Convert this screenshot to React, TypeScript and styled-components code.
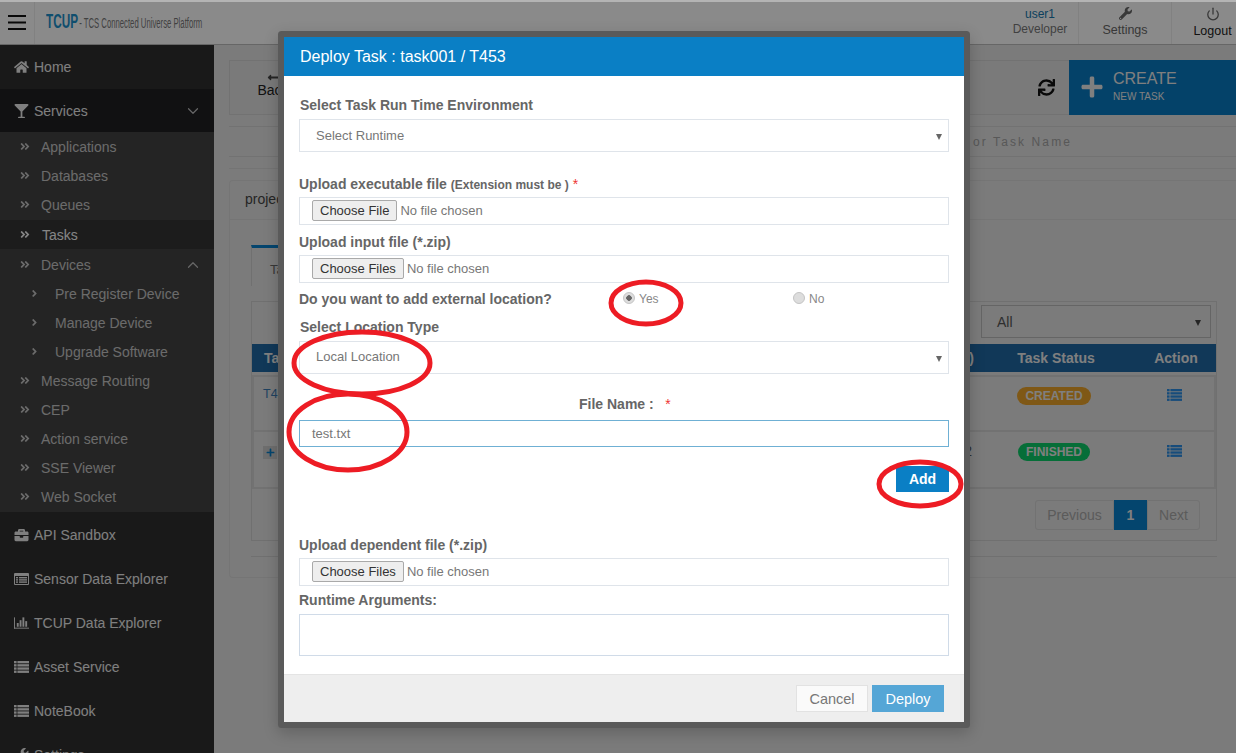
import React from "react";
import styled, { createGlobalStyle } from "styled-components";
import {
  FaHome,
  FaGlassMartini,
  FaAngleDoubleRight,
  FaAngleRight,
  FaBriefcase,
  FaWrench,
  FaSync,
  FaPlus,
  FaLongArrowAltLeft,
} from "react-icons/fa";
import { ChevronDown, ChevronUp, Power } from "lucide-react";

const GlobalStyle = createGlobalStyle`
  html, body {
    margin: 0;
    padding: 0;
    background: #e0e0e0;
    font-family: "Liberation Sans", Arial, sans-serif;
    overflow: hidden;
  }
  * { box-sizing: border-box; }
`;

const Page = styled.div`
  position: relative;
  width: 1236px;
  height: 753px;
  overflow: hidden;
  background: #e0e0e0;
`;

const TopStrip = styled.div`
  height: 2px;
  background: #b4b4b4;
`;

const Header = styled.header`
  display: flex;
  align-items: stretch;
  height: 43px;
  background: #fcfcfc;
  border-bottom: 1px solid #bbb;
`;

const MenuToggle = styled.div`
  width: 35px;
  display: flex;
  align-items: center;
  justify-content: center;
  color: #111;
  border-right: 1px solid #ececec;
  padding-bottom: 1px;
`;

const Logo = styled.div`
  display: flex;
  align-items: baseline;
  margin-left: 11px;
  padding-top: 7px;
  white-space: nowrap;
  transform: scaleX(0.56);
  transform-origin: left center;
`;

const LogoMark = styled.span`
  font-size: 21px;
  font-weight: 700;
  color: #1c8fc8;
`;

const LogoText = styled.span`
  font-size: 13.8px;
  color: #777;
  margin-left: 2px;
`;

const HeaderRight = styled.div`
  margin-left: auto;
  display: flex;
`;

const UserBlock = styled.div`
  width: 89px;
  padding: 5px 0 0 13px;
  text-align: center;
  font-size: 12px;
  line-height: 15px;
  color: #777;
  span { display: block; color: #1676ab; }
`;

const HeaderAction = styled.div<{ $w: number; $dark?: boolean; $shift?: number }>`
  width: ${(p) => p.$w}px;
  padding: 5px 0 0 ${(p) => p.$shift ?? 0}px;
  border-left: 1px solid #ececec;
  text-align: center;
  font-size: 12.5px;
  color: ${(p) => (p.$dark ? "#222" : "#666")};
  svg { display: block; margin: 0 auto 3px; color: #666; }
`;

const Main = styled.div`
  display: flex;
  height: 708px;
`;

const Sidebar = styled.nav`
  width: 214px;
  flex: none;
  background: #2f2f2f;
  color: #e8e8e8;
  font-size: 14px;
  overflow: hidden;
`;

const NavItem = styled.div<{ $active?: boolean }>`
  display: flex;
  align-items: center;
  height: 44px;
  padding: 0 14px;
  background: ${(p) => (p.$active ? "#1f1f22" : "transparent")};
  > svg:first-child { width: 15px; font-size: 14px; margin-right: 5px; flex: none; }
`;

const Caret = styled.span`
  margin-left: auto;
  margin-right: -2px;
  display: flex;
  color: #bbb;
`;

const SubMenu = styled.div`
  background: #434343;
  padding-bottom: 1px;
  margin-bottom: 1px;
  > :first-child { margin-top: -1px; }
`;

const SubItem = styled.div<{ $active?: boolean; $deep?: boolean }>`
  display: flex;
  align-items: center;
  height: 29px;
  margin: ${(p) => (p.$active ? "1px 0" : "0")};
  padding: 0 14px 0 ${(p) => (p.$deep ? "30px" : "20px")};
  color: ${(p) => (p.$active ? "#f2f2f2" : "#c4c4c4")};
  background: ${(p) => (p.$active ? "#333" : "transparent")};
  > svg:first-child {
    font-size: 11px;
    width: ${(p) => (p.$deep ? "9px" : "10px")};
    margin-right: ${(p) => (p.$deep ? "16px" : p.$active ? "12px" : "11px")};
    flex: none;
  }
`;

const Content = styled.main`
  flex: 1;
  padding: 15px 0 0 15px;
  min-width: 0;
`;

const Toolbar = styled.div`
  display: flex;
  align-items: center;
  height: 55px;
  background: #dfdfdf;
  border: 1px solid #cfcfcf;
  border-right: none;
`;

const BackButton = styled.div`
  width: 86px;
  padding-bottom: 6px;
  text-align: center;
  font-size: 14px;
  color: #222;
  svg { display: block; margin: 0 auto -2px; font-size: 13px; color: #444; }
`;

const RefreshIcon = styled.div`
  margin-left: auto;
  margin-right: 14px;
  display: flex;
  font-size: 17px;
  color: #111;
`;

const CreateButton = styled.div`
  width: 167px;
  height: 55px;
  margin: -1px 0;
  display: flex;
  align-items: center;
  padding: 0 0 1px 11px;
  background: #0878bf;
  color: #e8e8e8;
  > svg { font-size: 24px; margin-right: 9px; }
`;

const CreateTitle = styled.div`
  font-size: 16px;
  line-height: 18px;
  margin-top: -2px;
`;

const CreateSub = styled.div`
  font-size: 10px;
  line-height: 13px;
  margin-top: 2px;
`;

const SearchBar = styled.div`
  height: 31px;
  margin-top: 11px;
  padding-right: 164px;
  text-align: right;
  font-size: 12px;
  line-height: 30px;
  letter-spacing: 2.1px;
  color: #a0a0a0;
  border-top: 1px solid #cfcfcf;
  border-bottom: 1px solid #cfcfcf;
`;

const Rule = styled.div`
  height: 12px;
  border-bottom: 1px solid #d4d4d4;
`;

const Panel = styled.section`
  margin-top: 11px;
  height: 398px;
  border: 1px solid #d6d6d6;
  border-right: none;
  border-radius: 4px 0 0 4px;
`;

const PanelHead = styled.div`
  height: 39px;
  padding: 10px 15px 0;
  font-size: 14px;
  color: #444;
  border-bottom: 1px solid #d6d6d6;
`;

const PanelBody = styled.div`
  padding: 25px 19px 0 21px;
`;

const Tab = styled.div`
  width: 120px;
  height: 41px;
  padding: 14px 18px;
  font-size: 13px;
  color: #666;
  border-top: 3px solid #087fc8;
  border-left: 1px solid #ccc;
`;

const TabPane = styled.div`
  margin-top: 15px;
  height: 240px;
  border: 1px solid #ccc;
  padding-top: 3px;
`;

const PaneFoot = styled.div`
  height: 16px;
  border-bottom: 1px solid #ccc;
`;

const FilterRow = styled.div`
  display: flex;
  justify-content: flex-end;
  padding-right: 5px;
`;

const FilterSelect = styled.div`
  position: relative;
  width: 230px;
  height: 33px;
  padding: 8px 15px;
  font-size: 14px;
  color: #555;
  border: 1px solid #b8b8b8;
`;

const Arrow = styled.span<{ $muted?: boolean }>`
  position: absolute;
  right: ${(p) => (p.$muted ? 6 : 9)}px;
  top: 50%;
  margin-top: -2px;
  border-left: 3.5px solid transparent;
  border-right: 3.5px solid transparent;
  border-top: 6px solid ${(p) => (p.$muted ? "#666" : "#444")};
`;

const HeadRow = styled.div`
  display: grid;
  grid-template-columns: 1fr 160px 80px;
  height: 28px;
  margin-top: 6px;
  font-size: 14px;
  line-height: 28px;
  font-weight: 700;
  color: #e8e8e8;
  background: #1f66a0;
`;

const BodyRow = styled.div<{ $first?: boolean }>`
  display: grid;
  grid-template-columns: 1fr 160px 80px;
  height: 57px;
  margin-top: ${(p) => (p.$first ? "3px" : "0")};
  padding-top: ${(p) => (p.$first ? "0" : "1px")};
  font-size: 14px;
  color: #555;
  border: 2px solid #d0d0d0;
  border-top: ${(p) => (p.$first ? "2px solid #d0d0d0" : "none")};
`;

const Cell = styled.div<{ $center?: boolean }>`
  display: flex;
  justify-content: ${(p) => (p.$center ? "center" : "space-between")};
  padding: 0 ${(p) => (p.$center ? "0" : "2px")} 0 ${(p) => (p.$center ? "0" : "12px")};
`;

const RowCell = styled(Cell)`
  align-items: flex-start;
  padding-top: 10px;
  padding-left: ${(p) => (p.$center ? "0" : "9px")};
`;

const IdLink = styled.span`
  color: #3a78b0;
  font-size: 12.5px;
`;

const ExpandBox = styled.span`
  display: inline-flex;
  align-items: center;
  justify-content: center;
  width: 14px;
  height: 13px;
  margin-top: 3px;
  background: #c8c8c8;
  color: #087fc8;
  font-size: 9px;
`;

const Badge = styled.span<{ $color: string }>`
  display: inline-block;
  padding: 1px 8px;
  border-radius: 9px;
  background: ${(p) => p.$color};
  color: #e8e8e8;
  font-size: 12px;
  font-weight: 700;
  line-height: 16px;
`;

const ActionIcon = styled.span`
  display: inline-flex;
  padding-top: 2px;
  color: #2a8be0;
`;

const Pager = styled.div`
  display: flex;
  justify-content: flex-end;
  margin: 11px 16px 0 0;
  font-size: 14px;
  height: 30px;
`;

const PageCell = styled.span<{ $current?: boolean; $w: number; $round?: string }>`
  width: ${(p) => p.$w}px;
  display: flex;
  align-items: center;
  justify-content: center;
  color: ${(p) => (p.$current ? "#e8e8e8" : "#a6a6a6")};
  font-weight: ${(p) => (p.$current ? 700 : 400)};
  background: ${(p) => (p.$current ? "#087fc8" : "transparent")};
  border: 1px solid ${(p) => (p.$current ? "#087fc8" : "#cfcfcf")};
  border-radius: ${(p) => p.$round ?? "0"};
`;

const Backdrop = styled.div`
  position: absolute;
  inset: 2px 0 0 0;
  background: rgba(0, 0, 0, 0.45);
`;

const Modal = styled.div`
  position: absolute;
  left: 284px;
  top: 37px;
  width: 680px;
  height: 685px;
  display: flex;
  flex-direction: column;
  background: #fff;
  box-shadow: 0 0 0 6px #5a5a5a, 0 5px 15px 6px rgba(0, 0, 0, 0.2);
  border-radius: 1px;
`;

const ModalTitle = styled.div`
  height: 39px;
  flex: none;
  padding: 0 16px;
  background: #0a7fc5;
  color: #fff;
  font-size: 16px;
  line-height: 39px;
`;

const ModalBody = styled.div`
  flex: 1;
  padding: 0 15px;
  display: flex;
  flex-direction: column;
`;

const Label = styled.div<{ $top: number; $bottom?: number; $inset?: boolean }>`
  margin-top: ${(p) => p.$top}px;
  margin-bottom: ${(p) => p.$bottom ?? 5}px;
  padding-left: ${(p) => (p.$inset ? 1 : 0)}px;
  height: 16px;
  font-size: 14px;
  line-height: 16px;
  font-weight: 700;
  color: #666;
  white-space: nowrap;
`;

const LabelHint = styled.span`
  font-size: 12px;
`;

const Required = styled.span`
  color: #e33;
  font-weight: 400;
`;

const SelectBox = styled.div<{ $lift: number }>`
  position: relative;
  height: 33px;
  padding: 0 0 ${(p) => p.$lift}px 16px;
  display: flex;
  align-items: center;
  font-size: 13px;
  color: #777;
  border: 1px solid #dfe4ea;
`;

const FileBox = styled.div`
  height: 28px;
  display: flex;
  align-items: center;
  padding: 0 0 1px 12px;
  font-size: 13px;
  color: #777;
  border: 1px solid #dfe4ea;
`;

const ChooseButton = styled.button`
  height: 21px;
  padding: 0 7px;
  margin: 0 3px 0 0;
  font: 13px "Liberation Sans", sans-serif;
  color: #333;
  background: #eee;
  border: 1px solid #a9a9a9;
  border-radius: 2px;
`;

const RadioRow = styled.div`
  display: flex;
  margin-top: 8px;
  height: 16px;
  align-items: center;
`;

const RadioLabel = styled.span`
  font-size: 14px;
  font-weight: 700;
  color: #666;
  width: 324px;
`;

const RadioOption = styled.span<{ $w: number }>`
  display: flex;
  align-items: center;
  width: ${(p) => p.$w}px;
  font-size: 12px;
  color: #888;
`;

const RadioDot = styled.span<{ $on?: boolean }>`
  width: 12px;
  height: 12px;
  margin: -3px 4px 0 0;
  border-radius: 50%;
  background: ${(p) =>
    p.$on ? "radial-gradient(circle, #666 0 2.5px, #ddd 3px)" : "#ddd"};
  border: 1px solid #c4c4c4;
`;

const CenterLabel = styled.div`
  margin-top: 22px;
  height: 16px;
  padding-left: 280px;
  margin-bottom: 8px;
  font-size: 14px;
  line-height: 16px;
  font-weight: 700;
  color: #666;
`;

const TextField = styled.div`
  height: 27px;
  padding-left: 12px;
  font-size: 13px;
  line-height: 25px;
  color: #777;
  border: 1px solid #6fb0d4;
`;

const AddRow = styled.div`
  display: flex;
  justify-content: flex-end;
  margin-top: 19px;
`;

const AddButton = styled.button`
  width: 53px;
  height: 26px;
  padding: 0;
  background: #0a7fc5;
  border: none;
  color: #fff;
  font: 700 14px "Liberation Sans", sans-serif;
`;

const TextArea = styled.div`
  height: 42px;
  border: 1px solid #d0dbe8;
`;

const ModalFooter = styled.div`
  height: 48px;
  flex: none;
  display: flex;
  justify-content: flex-end;
  gap: 4px;
  padding: 10px 20px 0 0;
  background: #eee;
  border-top: 1px solid #e4e4e4;
`;

const FooterButton = styled.button<{ $primary?: boolean }>`
  width: 72px;
  height: 27px;
  padding: 0;
  font: 14.5px "Liberation Sans", sans-serif;
  color: ${(p) => (p.$primary ? "#fff" : "#777")};
  background: ${(p) => (p.$primary ? "#55a6d6" : "#fafafa")};
  border: 1px solid ${(p) => (p.$primary ? "#55a6d6" : "#e2e2e2")};
`;

const Scribbles = styled.svg`
  position: absolute;
  left: 0;
  top: 0;
  pointer-events: none;
`;

const HamburgerGlyph = () => (
  <svg width="18" height="15" viewBox="0 0 18 15" fill="currentColor">
    <rect y="0" width="18" height="2" />
    <rect y="6.5" width="18" height="2" />
    <rect y="13" width="18" height="2" />
  </svg>
);

// the old four-row list icon, which the icon packages no longer carry
const ListGlyph = () => (
  <svg width="15" height="12" viewBox="0 0 15 12" fill="currentColor">
    {[0, 3.2, 6.4, 9.6].map((y) => (
      <g key={y}>
        <rect x="0" y={y} width="2.6" height="2.3" />
        <rect x="3.4" y={y} width="11.6" height="2.3" />
      </g>
    ))}
  </svg>
);

const ListAltGlyph = () => (
  <svg width="15" height="12" viewBox="0 0 15 12" fill="currentColor">
    <path d="M0 1a1 1 0 0 1 1-1h13a1 1 0 0 1 1 1v10a1 1 0 0 1-1 1H1a1 1 0 0 1-1-1zm1 2v8h13V3z" fillRule="evenodd" />
    <rect x="2" y="4" width="2" height="1.4" />
    <rect x="5" y="4" width="8" height="1.4" />
    <rect x="2" y="6.2" width="2" height="1.4" />
    <rect x="5" y="6.2" width="8" height="1.4" />
    <rect x="2" y="8.4" width="2" height="1.4" />
    <rect x="5" y="8.4" width="8" height="1.4" />
  </svg>
);

const BarChartGlyph = () => (
  <svg width="16" height="12" viewBox="0 0 16 12" fill="currentColor">
    <rect x="0" y="0" width="1" height="12" />
    <rect x="0" y="11" width="16" height="1" />
    <rect x="3" y="6" width="2" height="4" />
    <rect x="6" y="3" width="2" height="7" />
    <rect x="9" y="0" width="2" height="10" />
    <rect x="12" y="4" width="2" height="6" />
  </svg>
);

const subItems = ["Applications", "Databases", "Queues"];
const deviceItems = ["Pre Register Device", "Manage Device", "Upgrade Software"];
const lowerItems = ["Message Routing", "CEP", "Action service", "SSE Viewer", "Web Socket"];

const rings = [
  { cx: 646, cy: 303, rx: 35, ry: 21 },
  { cx: 362, cy: 363, rx: 68, ry: 31 },
  { cx: 348, cy: 432, rx: 59, ry: 38 },
  { cx: 920, cy: 484, rx: 41, ry: 22 },
];

const FileField = ({ button }: { button: string }) => (
  <FileBox>
    <ChooseButton>{button}</ChooseButton>
    No file chosen
  </FileBox>
);

export default function App() {
  return (
    <Page>
      <GlobalStyle />
      <TopStrip />
      <Header>
        <MenuToggle>
          <HamburgerGlyph />
        </MenuToggle>
        <Logo>
          <LogoMark>TCUP</LogoMark>
          <LogoText>- TCS Connected Universe Platform</LogoText>
        </Logo>
        <HeaderRight>
          <UserBlock>
            <span>user1</span>
            Developer
          </UserBlock>
          <HeaderAction $w={93}>
            <FaWrench size={13} />
            Settings
          </HeaderAction>
          <HeaderAction $w={65} $dark $shift={17}>
            <Power size={14} strokeWidth={2.2} />
            Logout
          </HeaderAction>
        </HeaderRight>
      </Header>
      <Main>
        <Sidebar>
          <NavItem>
            <FaHome />
            Home
          </NavItem>
          <NavItem $active>
            <FaGlassMartini />
            Services
            <Caret>
              <ChevronDown size={18} strokeWidth={1.6} />
            </Caret>
          </NavItem>
          <SubMenu>
            {subItems.map((name) => (
              <SubItem key={name}>
                <FaAngleDoubleRight />
                {name}
              </SubItem>
            ))}
            <SubItem $active>
              <FaAngleDoubleRight />
              Tasks
            </SubItem>
            <SubItem>
              <FaAngleDoubleRight />
              Devices
              <Caret>
                <ChevronUp size={18} strokeWidth={1.6} />
              </Caret>
            </SubItem>
            {deviceItems.map((name) => (
              <SubItem key={name} $deep>
                <FaAngleRight />
                {name}
              </SubItem>
            ))}
            {lowerItems.map((name) => (
              <SubItem key={name}>
                <FaAngleDoubleRight />
                {name}
              </SubItem>
            ))}
          </SubMenu>
          <NavItem>
            <FaBriefcase />
            API Sandbox
          </NavItem>
          <NavItem>
            <ListAltGlyph />
            Sensor Data Explorer
          </NavItem>
          <NavItem>
            <BarChartGlyph />
            TCUP Data Explorer
          </NavItem>
          <NavItem>
            <ListGlyph />
            Asset Service
          </NavItem>
          <NavItem>
            <ListGlyph />
            NoteBook
          </NavItem>
          <NavItem>
            <FaWrench />
            Settings
          </NavItem>
        </Sidebar>
        <Content>
          <Toolbar>
            <BackButton>
              <FaLongArrowAltLeft />
              Back
            </BackButton>
            <RefreshIcon>
              <FaSync />
            </RefreshIcon>
            <CreateButton>
              <FaPlus />
              <div>
                <CreateTitle>CREATE</CreateTitle>
                <CreateSub>NEW TASK</CreateSub>
              </div>
            </CreateButton>
          </Toolbar>
          <SearchBar>Search by Task ID or Task Name</SearchBar>
          <Rule />
          <Panel>
            <PanelHead>project</PanelHead>
            <PanelBody>
              <Tab>Tasks</Tab>
              <TabPane>
                <FilterRow>
                  <FilterSelect>
                    All
                    <Arrow />
                  </FilterSelect>
                </FilterRow>
                <HeadRow>
                  <Cell>
                    Task ID<span>)</span>
                  </Cell>
                  <Cell $center>Task Status</Cell>
                  <Cell $center>Action</Cell>
                </HeadRow>
                <BodyRow $first>
                  <RowCell>
                    <IdLink>T453</IdLink>
                  </RowCell>
                  <RowCell $center>
                    <Badge $color="#e8a028">CREATED</Badge>
                  </RowCell>
                  <RowCell $center>
                    <ActionIcon>
                      <ListGlyph />
                    </ActionIcon>
                  </RowCell>
                </BodyRow>
                <BodyRow>
                  <RowCell>
                    <ExpandBox>
                      <FaPlus />
                    </ExpandBox>
                    <span>2</span>
                  </RowCell>
                  <RowCell $center>
                    <Badge $color="#0cc866">FINISHED</Badge>
                  </RowCell>
                  <RowCell $center>
                    <ActionIcon>
                      <ListGlyph />
                    </ActionIcon>
                  </RowCell>
                </BodyRow>
                <Pager>
                  <PageCell $w={79} $round="3px 0 0 3px">
                    Previous
                  </PageCell>
                  <PageCell $w={33} $current>
                    1
                  </PageCell>
                  <PageCell $w={53} $round="0 3px 3px 0">
                    Next
                  </PageCell>
                </Pager>
              </TabPane>
              <PaneFoot />
            </PanelBody>
          </Panel>
        </Content>
      </Main>
      <Backdrop />
      <Modal>
        <ModalTitle>Deploy Task : task001 / T453</ModalTitle>
        <ModalBody>
          <Label $top={21} $bottom={6} $inset>
            Select Task Run Time Environment
          </Label>
          <SelectBox $lift={1}>
            Select Runtime
            <Arrow $muted />
          </SelectBox>
          <Label $top={24}>
            Upload executable file <LabelHint>(Extension must be )</LabelHint> <Required>*</Required>
          </Label>
          <FileField button="Choose File" />
          <Label $top={9}>Upload input file (*.zip)</Label>
          <FileField button="Choose Files" />
          <RadioRow>
            <RadioLabel>Do you want to add external location?</RadioLabel>
            <RadioOption $w={170}>
              <RadioDot $on />
              Yes
            </RadioOption>
            <RadioOption $w={40}>
              <RadioDot />
              No
            </RadioOption>
          </RadioRow>
          <Label $top={12} $bottom={6} $inset>
            Select Location Type
          </Label>
          <SelectBox $lift={2}>
            Local Location
            <Arrow $muted />
          </SelectBox>
          <CenterLabel>
            File Name : &nbsp; <Required>*</Required>
          </CenterLabel>
          <TextField>test.txt</TextField>
          <AddRow>
            <AddButton>Add</AddButton>
          </AddRow>
          <Label $top={45}>Upload dependent file (*.zip)</Label>
          <FileField button="Choose Files" />
          <Label $top={6} $bottom={6}>
            Runtime Arguments:
          </Label>
          <TextArea />
        </ModalBody>
        <ModalFooter>
          <FooterButton>Cancel</FooterButton>
          <FooterButton $primary>Deploy</FooterButton>
        </ModalFooter>
      </Modal>
      <Scribbles width={1236} height={753}>
        {rings.map((r) => (
          <ellipse key={r.cx} {...r} fill="none" stroke="#ed1c24" strokeWidth={5} />
        ))}
      </Scribbles>
    </Page>
  );
}
